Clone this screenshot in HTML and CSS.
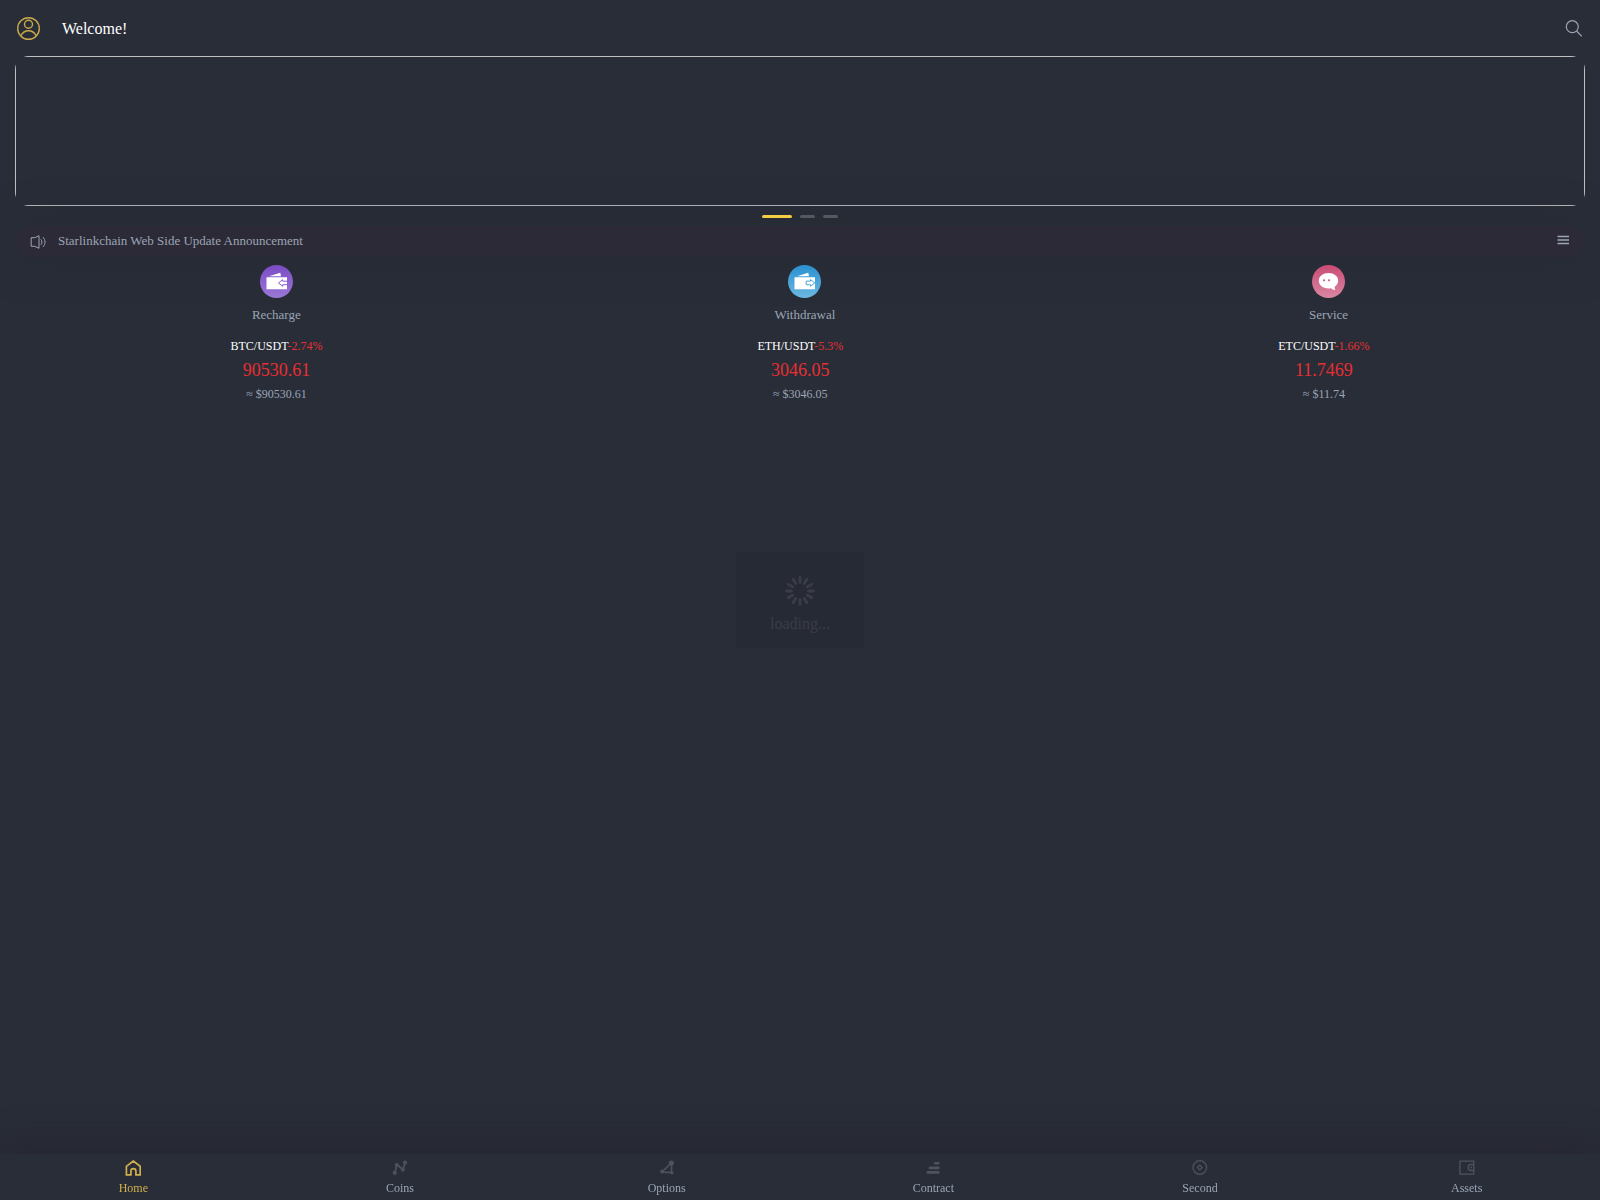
FILE: index.html
```html
<!doctype html>
<html lang="en">
  <head>
    <meta charset="UTF-8" />
    <meta name="viewport" content="width=device-width, initial-scale=1.0" />
    <title>Home</title>
    <link rel="stylesheet" href="styles.css">
  </head>
  <body>
    <header class="header">
      <svg class="user-icon" viewBox="0 0 24 24">
        <circle cx="11.500" cy="11.500" r="10.800" />
        <circle cx="11.500" cy="7.300" r="4" />
        <path d="M3.900 18.800c1.700-3.400 4.400-5 7.600-5s5.900 1.600 7.600 5" />
      </svg>
      <span class="welcome">Welcome!</span>
      <svg class="search-icon" viewBox="0 0 18 18">
        <circle cx="7.300" cy="6.700" r="6" />
        <path d="M11.600 11l5.200 5.300" />
      </svg>
    </header>

    <div class="banner"><div class="slide"></div></div>
    <div class="indicators">
      <i class="active"></i>
      <i></i>
      <i></i>
    </div>

    <div class="notice">
      <svg class="speaker-icon" viewBox="0 0 16 14">
        <path d="M1.200 2.700h3.600L9 .7v12.600l-4.200-2H1.200z" />
        <path d="M10.800 4.300c1.500 1.500 1.500 4 0 5.500M12.900 2.200c2.800 2.700 2.800 7 0 9.700" />
      </svg>
      <span class="notice-text">Starlinkchain Web Side Update Announcement</span>
      <svg class="menu-icon" viewBox="0 0 12 10">
        <path d="M.5 1.500H12M.5 5H12M.5 8.500H12" />
      </svg>
    </div>

    <div class="actions">
      <div class="action">
        <div class="round purple">
          <svg viewBox="0 0 33 33">
            <path class="fill" d="M6.500 12.200h20.500v12.100H6.500zM9 11.200L20.300 7.800l.7 3.400z" />
            <path class="arrow" d="M27 16.200h-4.300v-1.500L18.500 18l4.200 3.300v-1.600H27" />
          </svg>
        </div>
        <span>Recharge</span>
      </div>
      <div class="action">
        <div class="round blue">
          <svg viewBox="0 0 33 33">
            <path class="fill" d="M6.500 12.200h20.500v12.100H6.500zM9 11.200L20.300 7.800l.7 3.400z" />
            <path class="arrow" d="M18.200 16.100h4.300v-1.500l4.300 3.300-4.300 3.300v-1.500h-4.300z" />
          </svg>
        </div>
        <span>Withdrawal</span>
      </div>
      <div class="action">
        <div class="round pink">
          <svg viewBox="0 0 33 33">
            <path class="fill" d="M16.500 8c5.400 0 9.700 3.200 9.700 7.600 0 2.700-1.300 4.800-3.600 6.300 0 1.500.3 2.500 1 3.200-1.800 0-3.400-.7-4.600-1.800-6.700 1.200-12.200-2.300-12.200-7.700C6.800 11.200 11.100 8 16.500 8z" />
            <circle class="eye" cx="12" cy="15.300" r="1.100" />
            <circle class="eye" cx="17" cy="15.300" r="1.100" />
          </svg>
        </div>
        <span>Service</span>
      </div>
    </div>

    <div class="quotes">
      <div class="quote">
        <div class="pair">BTC/USDT<span>-2.74%</span></div>
        <div class="price">90530.61</div>
        <div class="usd">≈ $90530.61</div>
      </div>
      <div class="quote">
        <div class="pair">ETH/USDT<span>-5.3%</span></div>
        <div class="price">3046.05</div>
        <div class="usd">≈ $3046.05</div>
      </div>
      <div class="quote">
        <div class="pair">ETC/USDT<span>-1.66%</span></div>
        <div class="price">11.7469</div>
        <div class="usd">≈ $11.74</div>
      </div>
    </div>

    <div class="loading">
      <svg viewBox="0 0 30 30">
        <path d="M15 1.500v5M15 23.500v5M1.500 15h5M23.500 15h5M8.250 3.310l2.500 4.330M19.250 22.360l2.500 4.330M3.310 8.250l4.330 2.500M22.360 19.250l4.330 2.500M3.310 21.750l4.330-2.500M22.360 10.750l4.330-2.500M8.250 26.690l2.500-4.330M19.250 7.640l2.500-4.330" />
      </svg>
      <span>loading...</span>
    </div>

    <nav class="tabbar">
      <a class="tab active">
        <svg viewBox="0 0 16 16">
          <path d="M1.400 6.300L8.300 1l6.900 5.300v8.500h-4.300v-3.600a2.500 2.500 0 0 0-5 0v3.600H1.400z" />
        </svg>
        <span>Home</span>
      </a>
      <a class="tab">
        <svg class="bold" viewBox="0 0 16 16">
          <path d="M3 12l1.800-6.500M5.500 5l4.800 4M11.200 8.500L13 3.500" />
          <circle cx="2.700" cy="12.800" r="1.300" />
          <circle cx="4.700" cy="4.900" r="1.100" />
          <circle cx="10.800" cy="9.600" r="1.300" />
          <circle cx="13" cy="2.600" r="1.300" />
        </svg>
        <span>Coins</span>
      </a>
      <a class="tab">
        <svg class="bold" viewBox="0 0 16 16">
          <path d="M3 12l9.500-9.300v10z" />
          <circle class="dot" cx="12.300" cy="3" r="2.600" />
          <circle class="dot" cx="3.200" cy="11.500" r="1.900" />
          <circle class="dot" cx="13" cy="12.800" r="1.600" />
        </svg>
        <span>Options</span>
      </a>
      <a class="tab">
        <svg viewBox="0 0 16 16">
          <path class="bars" d="M10 3.300h3.400M4.900 7.900h8.500M2.700 12.400h10.700" />
        </svg>
        <span>Contract</span>
      </a>
      <a class="tab">
        <svg viewBox="0 0 16 16">
          <circle cx="7.800" cy="7.500" r="6.800" />
          <path d="M7.800 5.100l2.400 2.400-2.400 2.400-2.400-2.400z" />
        </svg>
        <span>Second</span>
      </a>
      <a class="tab">
        <svg viewBox="0 0 16 16">
          <path d="M.9 1.200h13.900v13H.9zM14.800 4.500h-2.600a3 3 0 0 0 0 6h2.600" />
          <circle class="dot" cx="12.300" cy="7.500" r=".9" />
        </svg>
        <span>Assets</span>
      </a>
    </nav>
  </body>
</html>
```

FILE: styles.css
```css
* {
  box-sizing: border-box;
}
body {
  margin: 0;
  height: 100vh;
  overflow: hidden;
  background: #292d38;
  color: #9aa5b5;
  font-family: "Liberation Serif", "Times New Roman", serif;
  font-size: 13px;
}
svg {
  display: block;
  fill: none;
  stroke: currentColor;
}
.header {
  display: flex;
  align-items: center;
  height: 56px;
  padding: 2px 17px 0;
}
.user-icon {
  width: 24px;
  height: 24px;
  margin-right: 21px;
  color: #c9a94b;
  stroke-width: 1.4;
}
.welcome {
  color: #fff;
  font-size: 16px;
}
.search-icon {
  width: 18px;
  height: 18px;
  margin-left: auto;
  stroke-width: 1.2;
}
.banner {
  height: 150px;
  margin: 0 15px;
  border-radius: 14px;
  overflow: hidden;
}
.slide {
  height: 100%;
  border: 1px solid #c0c0c0;
}
.indicators {
  display: flex;
  justify-content: center;
  gap: 8px;
  height: 20px;
  padding-top: 9px;
}
.indicators i {
  width: 15px;
  height: 3px;
  border-radius: 2px;
  background: #56585f;
}
.indicators .active {
  width: 30px;
  background: #f3cd42;
}
.notice {
  display: flex;
  align-items: center;
  height: 31px;
  margin: 0 15px;
  padding: 0 16px 0 15px;
  border-radius: 16px;
  background: #2d2a37;
  box-shadow: 0 0 40px rgba(38, 42, 50, 0.8);
}
.notice-text {
  padding-bottom: 2px;
}
.speaker-icon {
  width: 16px;
  height: 14px;
  margin: 1px 12px 0 0;
}
.menu-icon {
  width: 12px;
  height: 10px;
  margin: -4px 0 0 auto;
  stroke-width: 1.3;
}
.actions,
.quotes {
  display: flex;
  justify-content: space-around;
  padding: 0 15px;
}
.actions {
  padding-top: 8px;
}
.action {
  display: flex;
  flex-direction: column;
  align-items: center;
  gap: 9px;
  line-height: 15px;
}
.round {
  width: 33px;
  height: 33px;
  border-radius: 50%;
  color: #8b62cf;
  background: linear-gradient(#7b4bc5, #9b78d8);
}
.round.blue {
  color: #4da4d9;
  background: linear-gradient(#2b90d0, #6bb8e3);
}
.round.pink {
  color: #cd5f83;
  background: linear-gradient(#c94b74, #d987a2);
}
.round .fill {
  fill: #fff;
  stroke: none;
}
.round .eye {
  fill: currentColor;
  stroke: none;
}
.quotes {
  margin-top: 17px;
  padding: 0 13px;
  text-align: center;
}
.pair {
  color: #fff;
  font-size: 12px;
  line-height: 15px;
}
.pair span,
.price {
  color: #e62f33;
}
.price {
  margin-top: 5px;
  font-size: 18px;
  line-height: 22px;
}
.usd {
  margin-top: 6px;
  font-size: 12px;
  line-height: 15px;
}
/* fading toast over the page */
.loading {
  position: fixed;
  top: 552px;
  left: 50%;
  display: flex;
  flex-direction: column;
  align-items: center;
  gap: 8px;
  width: 128px;
  height: 96px;
  padding-top: 24px;
  transform: translateX(-50%);
  border-radius: 5px;
  background: #262a34;
  color: #3c3c49;
  font-size: 16px;
  line-height: 20px;
}
.loading svg {
  width: 30px;
  height: 30px;
  stroke-width: 2.8;
  stroke-linecap: round;
}
.tabbar {
  position: fixed;
  bottom: 0;
  left: 0;
  display: flex;
  width: 100%;
  height: 46px;
  background: #292d38;
  box-shadow: 0 0 40px rgba(38, 34, 44, 0.9);
}
.tab {
  display: flex;
  flex: 1;
  flex-direction: column;
  align-items: center;
  gap: 5px;
  padding-top: 6px;
  font-size: 12px;
  line-height: 15px;
}
.tab svg {
  width: 16px;
  height: 16px;
  color: #50515f;
  stroke-width: 1.3;
}
.tab .bold {
  stroke-width: 1.7;
}
.tab .dot {
  fill: currentColor;
  stroke: none;
}
.tab .bars {
  stroke-width: 2.6;
  stroke-linecap: round;
}
.tab.active,
.tab.active svg {
  color: #d0b04d;
}
.tab.active svg {
  stroke-width: 1.7;
}
```
